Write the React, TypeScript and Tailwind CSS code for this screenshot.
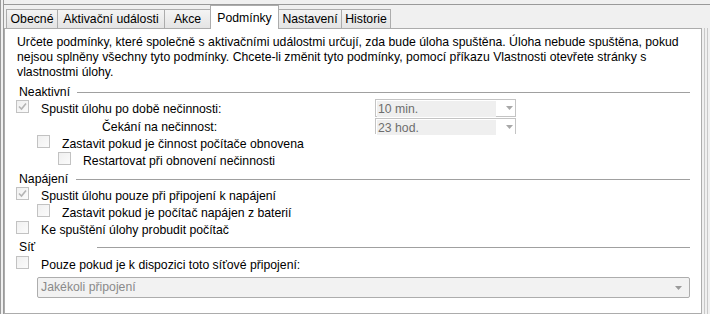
import React from "react";

const font = { fontFamily: '"Liberation Sans", Arial, sans-serif' };

function Check({ checked = false }: { checked?: boolean }) {
  return (
    <span className="mt-px flex h-[13px] w-[13px] shrink-0 items-center justify-center border border-[#c2c2c2] bg-gradient-to-br from-[#f0f0f0] to-[#fbfbfb]">
      {checked && (
        <svg width="9" height="9" viewBox="0 0 9 9">
          <path d="M1 4.5 L3.5 7 L8 1.5" fill="none" stroke="#b4b4b4" strokeWidth="1.6" />
        </svg>
      )}
    </span>
  );
}

function Row({ indent, checked, children }: { indent: string; checked?: boolean; children: React.ReactNode }) {
  return (
    <div className={`flex h-[17px] ${indent}`}>
      <Check checked={checked} />
      <span className="ml-[12px] mt-[2px] whitespace-nowrap leading-[16px] text-black">{children}</span>
    </div>
  );
}

function Group({ title, lineStart }: { title: string; lineStart: string }) {
  return (
    <div className="flex h-[14px] items-center">
      <span className="ml-[3px] leading-[14px] text-black">{title}</span>
      <div className={`h-px flex-1 bg-[#a0a0a0] ${lineStart}`} />
    </div>
  );
}

function SmallSelect({ value, open }: { value: string; open?: boolean }) {
  return (
    <div
      className={`flex w-[141px] items-center border-x border-t border-[#c4c4c4] bg-white ${
        open ? "h-[16px]" : "h-[18px] border-b"
      }`}
    >
      <span className="ml-px mt-px h-full w-[119px] bg-[#efefef] pl-[1px] leading-[16px] text-[#6d6d6d]">{value}</span>
      <svg className="ml-[10px]" width="7" height="4" viewBox="0 0 7 4">
        <path d="M0 0 H7 L3.5 4 Z" fill="#a8a8a8" />
      </svg>
    </div>
  );
}

export default function App() {
  const tabs = [
    { label: "Obecné", w: "w-[52px]" },
    { label: "Aktivační události", w: "w-[108px]" },
    { label: "Akce", w: "w-[47px]" },
  ];
  const tabsAfter = [
    { label: "Nastavení", w: "w-[64px]" },
    { label: "Historie", w: "w-[50px]" },
  ];

  return (
    <div className="flex h-[314px] w-[710px] overflow-hidden bg-[#f0f0f0] text-[12.25px]" style={font}>
      <div className="h-full w-[4px] border-x border-[#9a9a9a] bg-[#f0f0f0]" />
      <div className="flex flex-1 flex-col">
        <div className="h-[5px] border-b border-[#9a9a9a]" />
        <div className="flex h-[23px] items-end pl-[2px]">
          {tabs.map((t) => (
            <div
              key={t.label}
              className={`-mr-px flex h-[19px] items-center justify-center border border-b-0 border-[#acacac] bg-gradient-to-b from-[#f4f4f4] to-[#e4e4e4] text-black ${t.w}`}
            >
              {t.label}
            </div>
          ))}
          <div className="relative z-10 -mb-px -mr-px flex h-[24px] w-[69px] items-start justify-center border border-b-0 border-[#acacac] bg-white pt-[3px] text-black">
            Podmínky
          </div>
          {tabsAfter.map((t) => (
            <div
              key={t.label}
              className={`-mr-px flex h-[19px] items-center justify-center border border-b-0 border-[#acacac] bg-gradient-to-b from-[#f4f4f4] to-[#e4e4e4] text-black ${t.w}`}
            >
              {t.label}
            </div>
          ))}
        </div>
        <div className="flex flex-1">
          <div className="w-[698px] border border-[#acacac] bg-white pl-[11px] pr-[11px]">
            <p className="ml-px mt-[6px] leading-[15px] text-black">
              Určete podmínky, které společně s aktivačními událostmi určují, zda bude úloha spuštěna. Úloha nebude spuštěna, pokud
              <br />
              nejsou splněny všechny tyto podmínky. Chcete-li změnit tyto podmínky, pomocí příkazu Vlastnosti otevřete stránky s
              <br />
              vlastnostmi úlohy.
            </p>

            <div className="mt-[5px]">
              <Group title="Neaktivní" lineStart="ml-[7px]" />
            </div>
            <div className="flex h-[18px]">
              <div className="w-[359px]">
                <Row indent="" checked>
                  Spustit úlohu po době nečinnosti:
                </Row>
              </div>
              <SmallSelect value="10 min." />
            </div>
            <div className="flex h-[17px]">
              <div className="w-[359px] pl-[86px] pt-[2px] leading-[16px] text-black">Čekání na nečinnost:</div>
              <div className="pt-px">
                <SmallSelect value="23 hod." open />
              </div>
            </div>
            <Row indent="pl-[21px]">Zastavit pokud je činnost počítače obnovena</Row>
            <Row indent="pl-[42px]">Restartovat při obnovení nečinnosti</Row>

            <div className="mt-[4px]">
              <Group title="Napájení" lineStart="ml-[8px]" />
            </div>
            <Row indent="" checked>
              Spustit úlohu pouze při připojení k napájení
            </Row>
            <Row indent="pl-[21px]">Zastavit pokud je počítač napájen z baterií</Row>
            <Row indent="">Ke spuštění úlohy probudit počítač</Row>

            <div className="mt-[3px]">
              <Group title="Síť" lineStart="ml-[62px]" />
            </div>
            <div className="mt-px">
              <Row indent="">Pouze pokud je k dispozici toto síťové připojení:</Row>
            </div>
            <div className="ml-[21px] mt-[5px] flex h-[21px] items-center justify-between rounded-[2px] border border-[#adadad] bg-[#f2f2f2] pl-[3px] pr-[7px]">
              <span className="text-[#8a8a8a]">Jakékoli připojení</span>
              <svg width="7" height="4" viewBox="0 0 7 4">
                <path d="M0 0 H7 L3.5 4 Z" fill="#9a9a9a" />
              </svg>
            </div>
          </div>
          <div className="ml-[2px] h-full w-[4px] border-x border-[#c8c8c8]" />
        </div>
      </div>
    </div>
  );
}
